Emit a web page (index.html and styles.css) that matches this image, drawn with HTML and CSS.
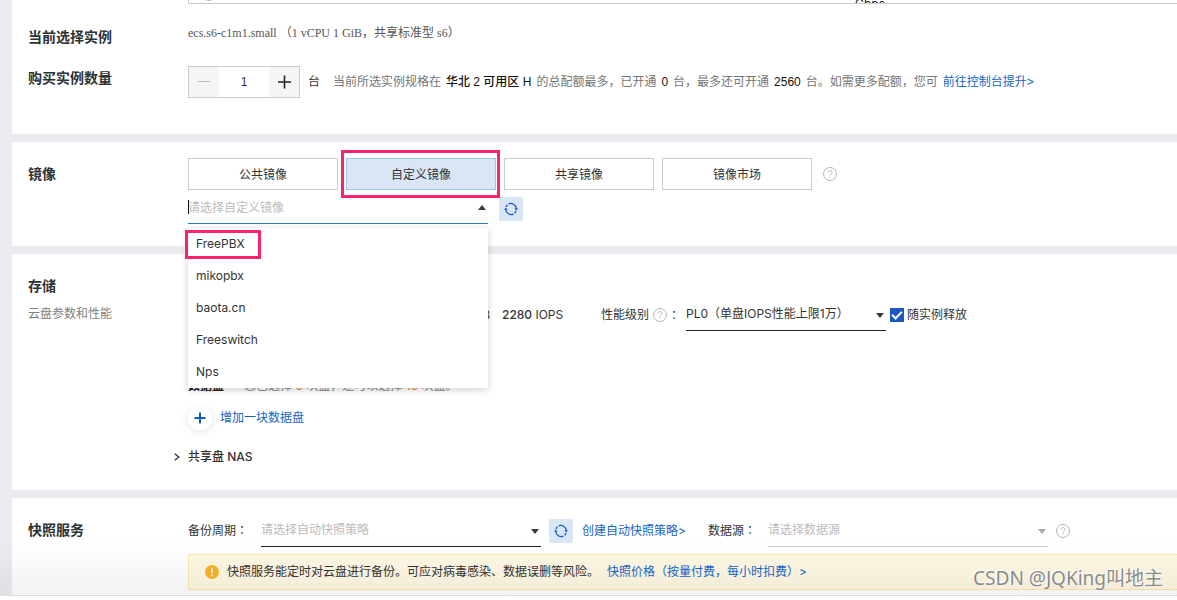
FILE: index.html
```html
<!DOCTYPE html>
<html lang="zh-CN">
<head>
<meta charset="utf-8">
<title>云服务器购买</title>
<link rel="stylesheet" href="styles.css">
</head>
<body>
<svg class="sprite" aria-hidden="true">
  <symbol id="help" viewBox="0 0 14 14"><circle cx="7" cy="7" r="6.5" fill="none" stroke="currentColor"/><path d="M5 5.6C5 4.3 5.9 3.6 7 3.6s2 .7 2 1.8c0 1.4-1.9 1.5-1.9 3" fill="none" stroke="currentColor"/><path d="M7.1 9.6v1.1" stroke="currentColor"/></symbol>
  <symbol id="refresh" viewBox="0 0 14 14"><path d="M4.6 1.9a5.4 5.4 0 0 1 7.6 4.6M9.4 12.1a5.4 5.4 0 0 1-7.6-4.6M2 5a5.4 5.4 0 0 1 1.4-2.2M12 9a5.4 5.4 0 0 1-1.4 2.2" fill="none" stroke="currentColor" stroke-width="1.3"/><path d="M10.4 6.3H14L12.2 8.6zM0 7.7h3.6L1.8 5.4z" fill="currentColor"/></symbol>
  <symbol id="down" viewBox="0 0 8 5"><path d="M0 0h8L4 5z" fill="currentColor"/></symbol>
</svg>
<main class="page">
  <section class="card card-instance">
    <div class="spec-table"><span class="spec-radio"></span><span class="spec-band">Gbps</span></div>
    <div class="row row-current">
      <h2 class="title">当前选择实例</h2>
      <p class="instance">ecs.s6-c1m1.small （1 vCPU 1 GiB，共享标准型 s6）</p>
    </div>
    <div class="row row-count">
      <label class="title" for="count">购买实例数量</label>
      <div class="line quota">
        <div class="stepper">
          <button type="button" aria-label="减少" disabled><svg width="12" height="12"><path d="M0 5.5h12" stroke="currentColor"/></svg></button>
          <input id="count" type="text" value="1">
          <button type="button" aria-label="增加"><svg width="14" height="14"><path d="M1 7h13M7.5 .5v13" stroke="currentColor" stroke-width="1.6"/></svg></button>
        </div>
        <span class="unit">台</span>
        <p class="hint"><span>当前所选实例规格在</span><b>华北 2 可用区 H</b><span>的总配额最多，已开通</span><b>0</b><span>台，最多还可开通</span><b>2560</b><span>台。如需更多配额，您可</span><a href="#">前往控制台提升&gt;</a></p>
      </div>
    </div>
  </section>

  <section class="card card-image">
    <div class="row">
      <h2 class="title">镜像</h2>
      <div>
        <div class="line tabs">
          <button type="button" class="tab">公共镜像</button>
          <button type="button" class="tab active">自定义镜像<span class="mark mark-tab"></span></button>
          <button type="button" class="tab">共享镜像</button>
          <button type="button" class="tab">镜像市场</button>
          <svg class="help"><use href="#help"/></svg>
        </div>
        <div class="line image-line">
          <div class="combo">
            <input type="text" placeholder="请选择自定义镜像" aria-label="自定义镜像">
            <span class="caret"></span>
            <svg class="arrow up"><use href="#down"/></svg>
            <ul class="menu">
              <li>FreePBX<span class="mark mark-option"></span></li>
              <li>mikopbx</li>
              <li>baota.cn</li>
              <li>Freeswitch</li>
              <li>Nps</li>
            </ul>
          </div>
          <button type="button" class="refresh" aria-label="刷新"><svg width="14" height="14"><use href="#refresh"/></svg></button>
        </div>
      </div>
    </div>
  </section>

  <section class="card card-storage">
    <div class="row">
      <div>
        <h2 class="title">存储</h2>
        <p class="subtitle">云盘参数和性能</p>
      </div>
      <div class="storage">
        <div class="line perf">
          <span class="size">GiB</span>
          <span class="iops"><b>2280</b> IOPS</span>
          <label class="level" for="level">性能级别<svg class="help"><use href="#help"/></svg><span class="colon" lang="zh-TW">：</span></label>
          <div class="select select-level"><select id="level"><option>PL0（单盘IOPS性能上限1万）</option></select><svg class="arrow"><use href="#down"/></svg></div>
          <label class="check"><input type="checkbox" checked>随实例释放</label>
        </div>
        <p class="disks"><b>数据盘</b><span>您已选择 <em>0</em> 块盘，还可以选择 <em>16</em> 块盘。</span></p>
        <a class="add" href="#"><span class="plus"><svg width="12" height="12"><path d="M.5 6h11M6 .5v11" stroke="currentColor" stroke-width="2"/></svg></span>增加一块数据盘</a>
        <button type="button" class="nas"><svg width="6" height="8"><path d="M.7.7 4.8 4 .7 7.3" fill="none" stroke="currentColor" stroke-width="1.3"/></svg>共享盘 NAS</button>
      </div>
    </div>
  </section>

  <section class="card card-snapshot">
    <div class="row">
      <h2 class="title">快照服务</h2>
      <div>
        <div class="line snap">
          <label class="cycle" for="cycle">备份周期<span class="colon" lang="zh-TW">：</span></label>
          <div class="select select-wide empty"><select id="cycle"><option>请选择自动快照策略</option></select><svg class="arrow"><use href="#down"/></svg></div>
          <button type="button" class="refresh" aria-label="刷新"><svg width="14" height="14"><use href="#refresh"/></svg></button>
          <a class="create" href="#">创建自动快照策略&gt;</a>
          <label class="source" for="source">数据源<span class="colon" lang="zh-TW">：</span></label>
          <div class="select select-wide empty muted"><select id="source"><option>请选择数据源</option></select><svg class="arrow"><use href="#down"/></svg></div>
          <svg class="help"><use href="#help"/></svg>
        </div>
        <div class="notice">
          <svg width="14" height="14"><circle cx="7" cy="7" r="7" fill="#f7b52c"/><path d="M7 3v5.5M7 9.8v1.4" stroke="#fff" stroke-width="1.4"/></svg>
          <p>快照服务能定时对云盘进行备份。可应对病毒感染、数据误删等风险。</p>
          <a href="#">快照价格（按量付费，每小时扣费）&gt;</a>
        </div>
      </div>
    </div>
  </section>
  <div class="shade"></div>
  <div class="watermark">CSDN @JQKing叫地主</div>
</main>
</body>
</html>
```
FILE: styles.css
```css
* { box-sizing: border-box; }
body {
  margin: 0;
  background: #fff;
  color: #333;
  font: 12px/18px Inter, "Noto Sans CJK SC", sans-serif;
}
h2, p, ul { margin: 0; padding: 0; }
button, input, select { font: inherit; color: inherit; margin: 0; padding: 0; }
a { color: #1366c9; text-decoration: none; }
b { font-weight: 500; }
em { color: #f57c1f; font-style: normal; }
.sprite { position: absolute; width: 0; height: 0; }

.page {
  position: relative;
  display: flex;
  flex-direction: column;
  gap: 8px;
  padding-left: 12px;
  background: #ecebf0;
  border-bottom: 1px solid #dcdcde;
  overflow: hidden;
}
.card { background: #fff; padding-left: 16px; }
.row { display: grid; grid-template-columns: 160px minmax(0, 1fr); }
.line { display: flex; white-space: nowrap; }
.title { font-size: 14px; line-height: 20px; font-weight: 600; color: #2c3235; }
.subtitle { color: #808080; margin-top: 9px; }
.help { width: 14px; height: 14px; color: #b5b5b5; flex: none; }
.colon { font-family: "Noto Sans CJK TC", sans-serif; }

/* Instance */
.card-instance { padding-bottom: 36px; }
.spec-table {
  display: flex;
  height: 4px;
  margin-left: 160px;
  border: 1px solid #ccc;
  border-width: 0 0 1px 1px;
  overflow: hidden;
  align-items: flex-end;
}
.spec-radio { width: 14px; height: 14px; margin: 0 639px 2px 13px; border: 1px solid #bbb; border-radius: 50%; flex: none; }
.spec-band { line-height: 10px; margin-bottom: -6px; color: #222; }
.row-current { padding-top: 23px; }
.instance { font: 12px/18px "Liberation Serif", "Noto Sans CJK SC", serif; margin-top: -3px; color: #555; }
.row-count { margin-top: 19px; }
.row-count .title { padding-top: 2px; }
.quota { align-items: center; font-family: "Liberation Sans", "Noto Sans CJK SC", sans-serif; }
.stepper { display: flex; width: 112px; height: 32px; border: 1px solid #ccc; }
.stepper button { width: 30px; border: 0; background: #f4f5f7; color: #222; display: flex; align-items: center; justify-content: center; }
.stepper button:disabled { color: #bbb; }
.stepper input { width: 50px; border: 0; text-align: center; }
.unit { margin: 0 13px 0 8px; }
.hint { display: flex; gap: 5px; color: #757575; }
.hint b { color: #111; }

/* Image */
.card-image { padding: 16px 0 22px 16px; }
.card-image .title { padding-top: 6px; }
.tabs { gap: 8px; align-items: center; }
.tab { position: relative; width: 150px; height: 32px; padding-top: 1px; background: #fff; border: 1px solid #ccc; }
.tab.active { background: #d9e6f5; border-color: #9cc6ec; }
.tabs .help { margin-left: 3px; }
.mark { position: absolute; border: 3px solid #fb2369; }
.mark-tab { inset: -9px -5px -9px -6px; }
.mark-option { left: -3px; top: 2px; width: 76px; height: 29px; }
.image-line { gap: 11px; align-items: center; }
.combo { position: relative; width: 300px; height: 34px; border-bottom: 1px solid #2c7abf; }
.combo input { width: 100%; height: 33px; padding-top: 1px; border: 0; background: none; outline: 0; }
.combo input::placeholder { color: #bbb; }
.caret { position: absolute; left: 0; top: 10px; width: 1px; height: 14px; background: #111; }
.arrow { position: absolute; right: 2px; top: 15px; width: 8px; height: 5px; color: #3a3a3a; pointer-events: none; }
.arrow.up { transform: rotate(180deg); }
.menu {
  position: absolute;
  z-index: 2;
  left: 0;
  top: 38px;
  width: 100%;
  list-style: none;
  background: #fff;
  box-shadow: 0 2px 8px rgba(0, 0, 0, .18);
}
.menu li { position: relative; padding: 7px 8px; }
.refresh { width: 24px; height: 24px; margin-top: 4px; border: 0; border-radius: 2px; background: #d9e6f5; color: #1559c9; display: flex; align-items: center; justify-content: center; flex: none; }

/* Storage */
.card-storage { padding: 22px 0 24px 16px; }
.storage { display: flex; flex-direction: column; align-items: flex-start; padding-top: 22px; }
.perf { align-items: center; }
.size { width: 302px; text-align: right; }
.iops { width: 111px; padding-left: 12px; }
.level { display: flex; align-items: center; width: 85px; }
.level .help { margin: 1px 1px 0 4px; }
.select { position: relative; border-bottom: 1px solid #222; flex: none; }
.select select { appearance: none; width: 100%; height: 32px; border: 0; background: none; outline: 0; }
.select-level { width: 200px; }
.select-wide { width: 280px; }
.empty select { color: #bbb; }
.muted { border-color: #ccc; }
.muted .arrow { color: #aaa; }
.check { display: flex; align-items: center; gap: 3px; margin-left: 4px; }
.check input { appearance: none; width: 14px; height: 14px; background: #1c57c4; display: grid; place-items: center; }
.check input::before { content: ""; width: 8px; height: 4px; margin-top: -2px; border: solid #fff; border-width: 0 0 2px 2px; transform: rotate(-45deg); }
.disks { display: flex; gap: 20px; margin-top: 46px; color: #888; }
.disks b { color: #222; font-weight: 600; }
.add { display: flex; align-items: center; gap: 8px; margin-top: 11px; }
.plus { width: 24px; height: 24px; border-radius: 50%; display: grid; place-items: center; background: #fff; color: #1559c9; box-shadow: 0 2px 10px rgba(0, 0, 0, .1); }
.nas { display: flex; align-items: center; gap: 8px; margin: 18px 0 0 -14px; border: 0; background: none; font-weight: 500; }

/* Snapshot */
.card-snapshot { padding: 16px 0 5px 16px; }
.card-snapshot .title { padding-top: 6px; }
.snap { align-items: center; }
.cycle { width: 73px; }
.snap .refresh { margin: 0 9px 0 8px; }
.create { width: 126px; }
.source { width: 60px; }
.snap .help { margin-left: 8px; }
.notice { display: flex; align-items: center; gap: 8px; height: 36px; margin-top: 7px; padding-left: 16px; background: #fff8e4; border: 1px solid #fbe9ac; border-right: 0; white-space: nowrap; }
.shade { position: absolute; left: 0; right: 0; bottom: 0; height: 56px; background: linear-gradient(transparent, rgba(0, 0, 0, .05)); pointer-events: none; }
.watermark { position: absolute; right: 14px; bottom: 3px; font: 19px/28px "Noto Sans", "Noto Sans CJK SC", sans-serif; color: #8b8b8b; text-shadow: -1px -1px 0 #fff; }
```
